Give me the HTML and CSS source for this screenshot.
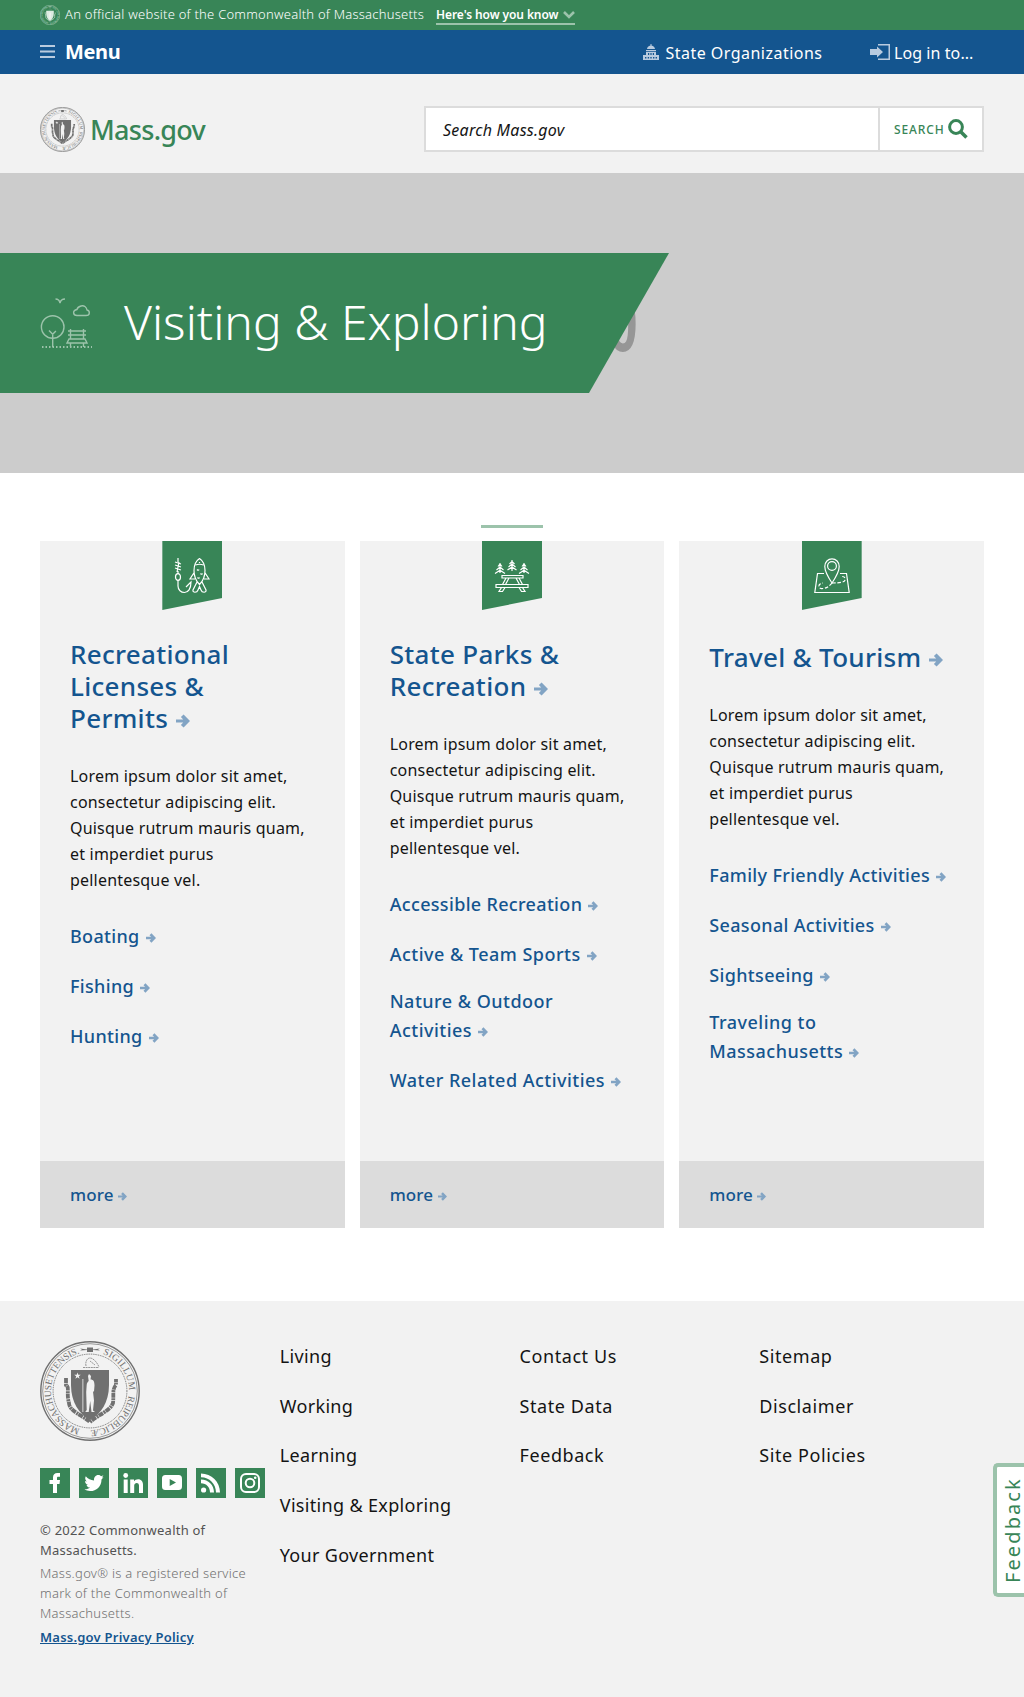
FILE: index.html
```html
<!DOCTYPE html>
<html lang="en">
<head>
<meta charset="utf-8">
<title>Visiting &amp; Exploring | Mass.gov</title>
<link rel="stylesheet" href="styles.css">
</head>
<body>
<svg class="defs" width="0" height="0" aria-hidden="true">
  <defs>
    <path id="ring" d="M50 89 A39 39 0 1 1 50.010 89"/>
    <symbol id="seal" viewBox="0 0 100 100">
      <circle cx="50" cy="50" r="49.200" fill="none" stroke="currentColor" stroke-width="1.400"/>
      <circle cx="50" cy="50" r="47.300" fill="none" stroke="currentColor" stroke-width=".7"/>
      <circle cx="50" cy="50" r="36.900" fill="none" stroke="currentColor" stroke-width="1" stroke-dasharray="1 .8"/>
      <text class="seal-text" fill="currentColor"><textPath href="#ring" startOffset="10" textLength="102">MASSACHUSETTENSIS.</textPath></text>
      <text class="seal-text" fill="currentColor"><textPath href="#ring" startOffset="135" textLength="48">SIGILLUM</textPath></text>
      <text class="seal-text" fill="currentColor"><textPath href="#ring" startOffset="188" textLength="56">REIPUBLICÆ</textPath></text>
      <path fill="currentColor" d="M40 7.500l7 1v-2h6v2l7-1-2 1 2 1-7-.5v2h-6v-2l-7 .5 2-1z"/>
      <path fill="none" stroke="currentColor" stroke-width="1" stroke-dasharray="2 .6" opacity=".7" d="M43 26.500h16M46 25c-1-4 1-8 4-8s7 4 9 9M50 20l5 4"/>
      <path fill="none" stroke="currentColor" stroke-width="3.800" stroke-dasharray="5 .7 2 .5" d="M26 37v7c4 2 0 8 3 18 0 8 13 12 21 19 8-7 20-11 23-19 1-9-1-14 3-18v-6"/>
      <path fill="currentColor" d="M31 29h38v15c0 17-8 29-19 35-11-6-19-18-19-35z"/>
      <path fill="#f2f2f2" d="M37.500 31.500l.8 2.300h2.500l-2 1.500.8 2.400-2.100-1.500-2.100 1.500.8-2.400-2-1.500h2.500zM48 35l1-2 2 2-.5 3.500c3 0 4 2 4 6l-.5 6h-1l1 9-1 10 2 1.500h-3.500l-1.300-11-1.500 11h-3.500l1.500-2-.5-18 .5-7c0-2 1-3 2-4zM42.500 38h.8v33h-.8z"/>
    </symbol>
    <symbol id="arrow" viewBox="0 0 14 14"><path fill="currentColor" d="M0 5.400h7.200L4.900 3.100 7.600.4 14 7l-6.400 6.600-2.700-2.700 2.300-2.300H0z"/></symbol>
  </defs>
</svg>

<div class="official">
  <svg class="official-seal"><use href="#seal"/></svg>
  <span class="official-text">An official website of the Commonwealth of Massachusetts</span>
  <button class="official-more">Here's how you know
    <svg width="12" height="8" viewBox="0 0 12 8"><path d="M1 1l5 5 5-5" fill="none" stroke="#9cc3ab" stroke-width="2.600"/></svg>
  </button>
</div>

<nav class="topnav">
  <button class="menu"><svg width="15" height="13" viewBox="0 0 15 13"><path d="M0 1h15M0 6.500h15M0 12h15" stroke="#b9cbdf" stroke-width="2"/></svg>Menu</button>
  <a class="toplink orgs"><svg width="16" height="16" viewBox="0 0 16 16"><path fill="#b9cbdf" fill-rule="evenodd" d="M7.500 0h1v1.500c2 .3 3.300 1.700 3.500 3.500H4c.2-1.800 1.500-3.200 3.500-3.500zM3 6h10v1.200H3zM3 8h10v3h3v5H0v-5h3zM5 9v2h1.200V9zM7.400 9v2h1.200V9zM9.800 9v2H11V9zM2 13v1.500h1.400V13zM4.700 13v1.500h1.400V13zM7.300 13v1.500h1.400V13zM10 13v1.500h1.400V13zM12.600 13v1.500H14V13z"/></svg>State Organizations</a>
  <a class="toplink login"><svg width="20" height="16" viewBox="0 0 20 16"><path fill="#b9cbdf" d="M0 5h7V2.500L13 8l-6 5.500V11H0zM8 0h12v16H8v-1.500h10.500v-13H8z"/></svg>Log in to...</a>
</nav>

<header class="masthead">
  <a class="logo"><svg class="logo-seal"><use href="#seal"/></svg>Mass.gov</a>
  <form class="search">
    <span class="search-field">Search Mass.gov</span>
    <span class="search-button">Search<svg width="20" height="20" viewBox="0 0 20 20"><circle cx="8" cy="8" r="6.400" fill="none" stroke="#388557" stroke-width="3"/><path d="M12.500 12.500l6 6" stroke="#388557" stroke-width="3.600"/></svg></span>
  </form>
</header>

<section class="hero">
  <span class="hero-ghost" aria-hidden="true">0</span>
  <div class="hero-band">
    <svg class="hero-icon" width="52" height="52" viewBox="0 0 52 52"><g fill="none" stroke="#9cc3ab" stroke-width="1.400"><circle cx="12.700" cy="29" r="11.300"/><path d="M12.700 49V36M9 32.500l3.700 3.800 3.200-3.300M15.500 1c2.500 0 4 1.500 4.500 4 .5-2.500 2.500-4 5-4M37 17.500h9c4.500 0 4-5 1-5.500-.5-3-3-5-6-4-3 1-4 3-4 3.500-5 1-4 6 0 6zM30.500 31v10M43.500 31v10M28 33h18M28 37h18M29 41h16l2 4H27zM30.500 45v4M43.500 45v4"/><path stroke-width="2" stroke-dasharray="1.500 2" d="M2 49h50"/></g></svg>
    <h1>Visiting &amp; Exploring</h1>
  </div>
</section>

<main class="main">
  <div class="cards">
    <article class="card">
      <div class="tab"><svg width="36" height="36" viewBox="0 0 36 36" fill="none" stroke="#fff" stroke-width="1.200"><path d="M4 0v4M1 4l6 2M1 7l6 2M1 10l6 2M5 4L3 14M4 13v3M4 22v6c0 4 3 6.500 6.500 6.500S17 31 17 24l-5 5"/><ellipse cx="4" cy="19" rx="2.500" ry="3.300"/><path d="M25.500.5c-3 2-5.500 6-5.500 12 0 6 2.500 11 5.500 14 3-3 5.500-8 5.500-14 0-6-2.500-10-5.500-12zM21.500 7q4-1.500 8 0M20.500 14l-4.500 7h5M30.500 14l4.500 7h-5M23 24l-4 8c-.5 3 4 3 5 0l1.500-3.500L27 32c1 3 5.500 3 5 0l-4-8M23 11.500q1.500 1.500 2 0M26.500 15.500q1.500 1.500 2 0M23.500 19.500q1.500 1.500 2 0M25.500 4v1"/></svg></div>
      <div class="card-body">
        <h2>Recreational Licenses &amp; Permits&nbsp;<svg class="arr"><use href="#arrow"/></svg></h2>
        <p>Lorem ipsum dolor sit amet, consectetur adipiscing elit. Quisque rutrum mauris quam, et imperdiet purus pellentesque vel.</p>
        <ul>
          <li>Boating&nbsp;<svg class="arr"><use href="#arrow"/></svg></li>
          <li>Fishing&nbsp;<svg class="arr"><use href="#arrow"/></svg></li>
          <li>Hunting&nbsp;<svg class="arr"><use href="#arrow"/></svg></li>
        </ul>
      </div>
      <a class="more">more <svg class="arr"><use href="#arrow"/></svg></a>
    </article>
    <article class="card">
      <div class="tab"><svg width="36" height="36" viewBox="0 0 36 36" fill="none" stroke="#fff" stroke-width="1.200"><path d="M8 17.500h21v2.500H8zM2 26.500h32v3H2zM12 20l-3.500 6.500M15 20l-3.500 6.500M22 20l3.500 6.500M25 20l3.500 6.500M7.500 29.500L5 33.500h3.500l2.500-4M28.500 29.500l2.500 4h-3.500l-2.500-4"/><path stroke-width="1.200" d="M18 2v11M15.500 6L18 3.500 20.500 6M14.500 9L18 6l3.500 3M13.500 12L18 9l4.500 3M6 5v10M4 8.500L6 6l2 2.500M2.500 12L6 9l3.500 3M1 15.500l5-3.300 5 3.300M30 5v10M28 8.500L30 6l2 2.500M26.500 12L30 9l3.500 3M25 15.500l5-3.300 5 3.300"/></svg></div>
      <div class="card-body">
        <h2>State Parks &amp; Recreation&nbsp;<svg class="arr"><use href="#arrow"/></svg></h2>
        <p>Lorem ipsum dolor sit amet, consectetur adipiscing elit. Quisque rutrum mauris quam, et imperdiet purus pellentesque vel.</p>
        <ul>
          <li>Accessible Recreation&nbsp;<svg class="arr"><use href="#arrow"/></svg></li>
          <li class="wide">Active &amp; Team Sports&nbsp;<svg class="arr"><use href="#arrow"/></svg></li>
          <li class="two wide">Nature &amp; Outdoor Activities&nbsp;<svg class="arr"><use href="#arrow"/></svg></li>
          <li class="wide">Water Related Activities&nbsp;<svg class="arr"><use href="#arrow"/></svg></li>
        </ul>
      </div>
      <a class="more">more <svg class="arr"><use href="#arrow"/></svg></a>
    </article>
    <article class="card">
      <div class="tab"><svg width="36" height="36" viewBox="0 0 36 36" fill="none" stroke="#fff" stroke-width="1.200"><path d="M18 25C14 19 10.800 13 10.800 8.500 10.800 4 14 .9 18 .9s7.200 3.100 7.200 7.600C25.200 13 22 19 18 25z"/><circle cx="18" cy="8" r="4.400"/><path d="M10 15.500H3.500L.8 34.500h34.400l-2.700-19H26"/><path stroke-dasharray="3.500 1.800" d="M18 25q-4 5-9 5.500c-5 1-6-5 0-5.500M18 25q13 0 13-3 1-4-5-3.500"/></svg></div>
      <div class="card-body">
        <h2 class="single">Travel &amp; Tourism&nbsp;<svg class="arr"><use href="#arrow"/></svg></h2>
        <p>Lorem ipsum dolor sit amet, consectetur adipiscing elit. Quisque rutrum mauris quam, et imperdiet purus pellentesque vel.</p>
        <ul>
          <li>Family Friendly Activities&nbsp;<svg class="arr"><use href="#arrow"/></svg></li>
          <li>Seasonal Activities&nbsp;<svg class="arr"><use href="#arrow"/></svg></li>
          <li>Sightseeing&nbsp;<svg class="arr"><use href="#arrow"/></svg></li>
          <li class="two wide">Traveling to Massachusetts&nbsp;<svg class="arr"><use href="#arrow"/></svg></li>
        </ul>
      </div>
      <a class="more">more <svg class="arr"><use href="#arrow"/></svg></a>
    </article>
  </div>
</main>

<footer class="footer">
  <div class="about">
    <svg class="footer-seal"><use href="#seal"/></svg>
    <div class="social">
      <a><svg viewBox="0 0 30 30"><path d="M13 25v-9h-3.500v-4H13V9.500C13 6.500 14.500 5 17.500 5H20v3.800h-1.600c-1.100 0-1.400.4-1.400 1.400V12h3l-.5 4H17v9z"/></svg></a>
      <a><svg viewBox="0 0 30 30"><path d="M24.500 9.300l-2 2.100c.1 7-5.500 11.800-11.500 11.600-2 0-4-.6-5.500-1.700 2 .2 4-.4 5.600-1.700-1.800-.1-3-1.200-3.600-2.700h1.700c-2-.6-3.200-2-3.100-4l1.700.5C6.200 12.100 5.700 10.200 6.800 8.300c2 2.500 5 4 8.300 4.200C14.500 9.500 16.600 7 19.300 7c1.100 0 2.100.5 2.800 1.200L24.500 7.300l-1.600 2.300z"/></svg></a>
      <a><svg viewBox="0 0 30 30"><circle cx="7.700" cy="7.500" r="2.400"/><path d="M5.700 11.500h4V25h-4zM12.200 11.500H16v1.800c2-3.300 9-2.900 9 3.200V25h-4v-7.500c0-3.500-4.800-3.200-4.800 0V25h-4z"/></svg></a>
      <a><svg viewBox="0 0 30 30"><path fill-rule="evenodd" d="M9 7h12c3 0 4 1 4 4v7c0 3-1 4-4 4H9c-3 0-4-1-4-4v-7c0-3 1-4 4-4zM12.700 11v7l6.300-3.400z"/></svg></a>
      <a><svg viewBox="0 0 30 30"><circle cx="7.600" cy="22" r="2.600"/><path d="M5 11.500v3.800c5.500 0 9 4 9 9.200h4C18 17 12.500 11.500 5 11.500zM5 5.500v3.700c8.500 0 15 6.800 15 15.300h4C24 14 15.500 5.500 5 5.500z"/></svg></a>
      <a><svg viewBox="0 0 30 30"><g fill="none" stroke="#fff" stroke-width="2"><rect x="6" y="6" width="18" height="18" rx="5"/><circle cx="15" cy="15" r="4.300"/></g><circle cx="20.200" cy="9.800" r="1.300"/></svg></a>
    </div>
    <p class="copy">© 2022 Commonwealth of Massachusetts.</p>
    <p class="mark">Mass.gov® is a registered service mark of the Commonwealth of Massachusetts.</p>
    <a class="privacy">Mass.gov Privacy Policy</a>
  </div>
  <ul class="links"><li>Living</li><li>Working</li><li>Learning</li><li>Visiting &amp; Exploring</li><li>Your Government</li></ul>
  <ul class="links wide"><li>Contact Us</li><li>State Data</li><li>Feedback</li></ul>
  <ul class="links wide"><li>Sitemap</li><li>Disclaimer</li><li>Site Policies</li></ul>
</footer>
<a class="feedback">Feedback</a>
</body>
</html>
```
FILE: styles.css
```css
* { box-sizing: border-box; }
body { margin: 0; position: relative; font-family: "Noto Sans", sans-serif; font-size: 16px; color: #141414; background: #fff; overflow-x: hidden; }
h1, h2, p, ul { margin: 0; padding: 0; }
ul { list-style: none; }
button { border: 0; background: none; padding: 0; font-family: inherit; color: inherit; }
svg { flex: none; }
.defs { position: absolute; }
.seal-text { font-family: "Liberation Serif", serif; font-size: 9.500px; }

.official { height: 30px; background: #388557; color: #fff; display: flex; align-items: center; padding: 0 40px; font-size: 13px; }
.official-seal { width: 20px; height: 20px; margin-right: 5px; color: #dcebe1; }
.official-text { font-weight: 300; letter-spacing: .235px; padding-bottom: 2px; }
.official-more { margin-left: 12px; font-size: 12px; font-weight: 600; line-height: 17px; border-bottom: 2px solid #9cc3ab; white-space: nowrap; letter-spacing: -.100px; }
.official-more svg { margin-left: 2px; }

.topnav { height: 44px; background: #14558f; color: #fff; display: flex; align-items: center; padding: 0 50.500px 0 40px; }
.menu { font-size: 20px; font-weight: 700; display: flex; align-items: center; gap: 10px; margin-right: auto; letter-spacing: -.350px; padding-bottom: 1px; }
.menu svg { margin-top: -1px; }
.toplink { display: flex; align-items: center; gap: 6px; font-size: 16px; padding-top: 1px; }
.toplink svg { margin-top: -2px; }
.orgs { letter-spacing: .480px; }
.login { margin-left: 47.500px; gap: 4px; letter-spacing: .080px; }

.masthead { height: 99px; background: #f2f2f2; display: flex; align-items: flex-start; justify-content: space-between; padding: 32px 40px 0; }
.logo { display: flex; align-items: center; gap: 5px; color: #388557; font-size: 27px; line-height: 43px; font-weight: 500; letter-spacing: -.700px; padding-top: 1px; }
.logo-seal { width: 45px; height: 45px; color: #707070; }
.search { display: flex; width: 560px; height: 46px; border: 2px solid #dcdcdc; background: #fff; }
.search-field { flex: 1; padding-left: 17px; font-style: italic; line-height: 44px; letter-spacing: .250px; }
.search-button { width: 104px; border-left: 2px solid #dcdcdc; color: #388557; display: flex; align-items: center; padding-left: 14px; gap: 3.500px; font-size: 12px; font-weight: 500; letter-spacing: .900px; text-transform: uppercase; }

.hero { height: 300px; padding-top: 80px; background: #ccc; position: relative; }
.hero-ghost { position: absolute; left: 608px; top: 111px; font-family: "Liberation Sans", sans-serif; font-size: 80px; line-height: 80px; font-weight: 700; color: #969696; transform: scaleX(.67); transform-origin: left; }
.hero-band { position: relative; width: 669px; height: 140px; background: #388557; clip-path: polygon(0 0, 100% 0, 589px 100%, 0 100%); display: flex; align-items: center; padding-left: 40px; }
.hero-band h1 { margin: -4px 0 0 32px; font-size: 48px; font-weight: 300; color: #fff; }
.hero-icon { margin-top: 2px; }

.main { padding: 52px 40px 73px; }
.main::before { content: ""; display: block; width: 62px; height: 3px; background: #9cc3ab; margin: 0 auto 13px; }
.cards { display: flex; gap: 15px; height: 687px; }
.card { flex: 1 1 0; background: #f2f2f2; display: flex; flex-direction: column; }
.tab { width: 60px; height: 69px; margin: 0 auto; background: #388557; clip-path: polygon(0 0, 100% 0, 100% 57px, 0 100%); padding: 17px 12px 0; }
.card-body { padding: 28px 30px 0; flex: 1; }
.card h2 { font-size: 26px; line-height: 32px; font-weight: 500; letter-spacing: .300px; color: #14558f; }
.card h2.single { padding: 3px 0 0; }
.arr { width: 14px; height: 14px; margin-left: 1px; color: #82a4c4; }
.card p { margin: 29px 0 18px; max-width: 241px; line-height: 26px; letter-spacing: .200px; }
.card li { font-size: 18px; font-weight: 500; line-height: 50px; letter-spacing: .330px; color: #14558f; }
.card li.two { line-height: 29px; padding: 8px 0 10px; }
.card li.wide { letter-spacing: .480px; }
.card li .arr { width: 10px; height: 10px; }
.more { height: 67px; padding-left: 30px; line-height: 67px; background: #dcdcdc; color: #14558f; font-size: 17px; font-weight: 500; letter-spacing: .100px; }
.more .arr { width: 9px; height: 9px; margin-left: 0; }

.footer { background: #f2f2f2; height: 396px; padding: 40px 25px 0 40px; display: grid; grid-template-columns: repeat(4, 1fr); align-items: start; }
.footer-seal { display: block; width: 100px; height: 100px; color: #707070; }
.social { display: flex; gap: 9px; margin: 27px 0 22px; }
.social a { width: 30px; height: 30px; background: #388557; }
.social svg { display: block; width: 30px; height: 30px; fill: #fff; }
.about { font-size: 13px; line-height: 20px; letter-spacing: .230px; }
.copy { color: #535353; width: 200px; margin-bottom: 3px; }
.mark { color: #707070; font-weight: 300; width: 215px; margin-bottom: 4px; letter-spacing: .280px; }
.privacy { color: #14558f; font-weight: 600; text-decoration: underline; }
.links li { font-size: 18px; line-height: 30px; margin-bottom: 19.700px; letter-spacing: .330px; }
.links.wide li { letter-spacing: .580px; }
.feedback { position: absolute; right: 0; top: 1463px; width: 31px; height: 134px; border: 4px solid #9cc3ab; border-left: 0; border-radius: 0 5px 5px 0; background: #fff; color: #388557; font-size: 20px; line-height: 23px; letter-spacing: 2.100px; text-align: center; writing-mode: vertical-rl; transform: rotate(180deg); padding-right: 4px; }
```
